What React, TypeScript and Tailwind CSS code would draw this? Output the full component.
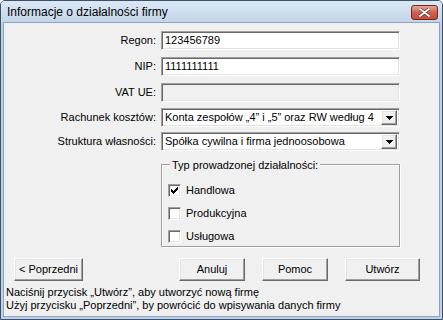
import React from 'react';

const font = { fontFamily: '"Liberation Sans", Arial, sans-serif' };

const sunken =
  'border border-t-[#a0a0a0] border-l-[#a0a0a0] border-r-white border-b-white shadow-[inset_1px_1px_0_#696969,inset_-1px_-1px_0_#e3e3e3]';
const raised =
  'border border-t-white border-l-white border-r-[#696969] border-b-[#696969] shadow-[inset_-1px_-1px_0_#a0a0a0,inset_1px_1px_0_#e3e3e3]';

// classic 7x7 check mark, pixel by pixel
const checkPixels = [
  '......x',
  '.....xx',
  'x...xxx',
  'xx.xxx.',
  'xxxxx..',
  '.xxx...',
  '..x....',
];

function CheckMark() {
  return (
    <svg width="7" height="7" viewBox="0 0 7 7" shapeRendering="crispEdges">
      {checkPixels.map((row, y) =>
        row.split('').map((c, x) =>
          c === 'x' ? <rect key={`${x}-${y}`} x={x} y={y} width="1" height="1" fill="#000" /> : null
        )
      )}
    </svg>
  );
}

function Field({ label, value, disabled }: { label: string; value: string; disabled?: boolean }) {
  return (
    <div className="flex items-center">
      <div className="w-[153px] pr-[1px] text-right">{label}</div>
      <div
        className={`ml-[4px] flex h-[19px] w-[239px] items-center pl-[3px] ${sunken} ${
          disabled ? 'bg-[#f0f0f0]' : 'bg-white'
        }`}
      >
        {value}
      </div>
    </div>
  );
}

function Select({ label, value }: { label: string; value: string }) {
  return (
    <div className="flex items-center">
      <div className="w-[153px] pr-[1px] text-right">{label}</div>
      <div className={`ml-[4px] flex h-[19px] w-[239px] items-center bg-white pl-[3px] pr-[2px] ${sunken}`}>
        <span className="flex-1 overflow-hidden whitespace-nowrap">{value}</span>
        <div className={`flex h-[15px] w-[16px] shrink-0 items-center justify-center bg-[#f0f0f0] ${raised}`}>
          <svg width="7" height="4" viewBox="0 0 7 4" shapeRendering="crispEdges">
            <path d="M0 0h7v1H0zM1 1h5v1H1zM2 2h3v1H2zM3 3h1v1H3z" fill="#000" />
          </svg>
        </div>
      </div>
    </div>
  );
}

function Check({ label, checked }: { label: string; checked?: boolean }) {
  return (
    <div className="flex h-[13px] items-center leading-[13px]">
      <div className={`flex h-[13px] w-[13px] shrink-0 items-center justify-center bg-white ${sunken}`}>
        {checked && <CheckMark />}
      </div>
      <span className="ml-[5px]">{label}</span>
    </div>
  );
}

function Button({ children, w }: { children: React.ReactNode; w: string }) {
  return (
    <div className={`flex h-[23px] items-center justify-center bg-[#f0f0f0] ${raised} ${w}`}>{children}</div>
  );
}

export default function App() {
  return (
    <div
      className="flex h-[320px] w-[443px] flex-col overflow-hidden rounded-t-[5px] border border-[#3d5169] bg-[#bed1e7] text-[11px] text-black"
      style={font}
    >
      {/* title bar */}
      <div className="flex h-[21px] shrink-0 items-center justify-between bg-gradient-to-b from-[#dbe7f4] to-[#c4d6ea] pl-[6px] pr-[4px]">
        <span className="text-[12px] text-[#000]">Informacje o działalności firmy</span>
        <div className="mt-[2px] flex h-[15px] w-[27px] items-center justify-center rounded-[3px] border border-[#6b2a22] bg-gradient-to-b from-[#e8a597] via-[#d0614f] to-[#c4493a]">
          <svg width="11" height="9" viewBox="0 0 11 9">
            <path d="M1 1l9 7M10 1L1 8" stroke="#5a2a24" strokeWidth="3.2" strokeLinecap="round" />
            <path d="M1 1l9 7M10 1L1 8" stroke="#fff" strokeWidth="1.8" strokeLinecap="round" />
          </svg>
        </div>
      </div>

      {/* client area */}
      <div className="mx-[2px] mb-[2px] flex flex-1 flex-col border border-[#8ea3bd] bg-[#f0f0f0] pt-[8px]">
        <Field label="Regon:" value="123456789" />
        <div className="mt-[7px]">
          <Field label="NIP:" value="1111111111" />
        </div>
        <div className="mt-[7px]">
          <Field label="VAT UE:" value="" disabled />
        </div>
        <div className="mt-[6px]">
          <Select label="Rachunek kosztów:" value="Konta zespołów „4” i „5” oraz RW według 4" />
        </div>
        <div className="mt-[5px]">
          <Select label="Struktura własności:" value="Spółka cywilna i firma jednoosobowa" />
        </div>

        {/* group box */}
        <div className="relative ml-[157px] mt-[13px] h-[83px] w-[239px] border border-[#a0a0a0] shadow-[1px_1px_0_#fff,inset_1px_1px_0_#fff]">
          <span className="absolute left-[8px] top-[-8px] bg-[#f0f0f0] px-[2px]">Typ prowadzonej działalności:</span>
          <div className="flex flex-col gap-[10px] pl-[6px] pt-[19px]">
            <Check label="Handlowa" checked />
            <Check label="Produkcyjna" />
            <Check label="Usługowa" />
          </div>
        </div>

        {/* buttons */}
        <div className="mt-[11px] flex items-center pl-[10px]">
          <Button w="w-[69px]">&lt; Poprzedni</Button>
          <div className="ml-[96px] flex gap-[17px]">
            <Button w="w-[66px]">Anuluj</Button>
            <Button w="w-[66px]">Pomoc</Button>
            <Button w="w-[75px]">Utwórz</Button>
          </div>
        </div>

        {/* hints */}
        <div className="mt-[5px] pl-[2px] leading-[13px]">
          <div>Naciśnij przycisk „Utwórz”, aby utworzyć nową firmę</div>
          <div>Użyj przycisku „Poprzedni”, by powrócić do wpisywania danych firmy</div>
        </div>
      </div>
    </div>
  );
}
